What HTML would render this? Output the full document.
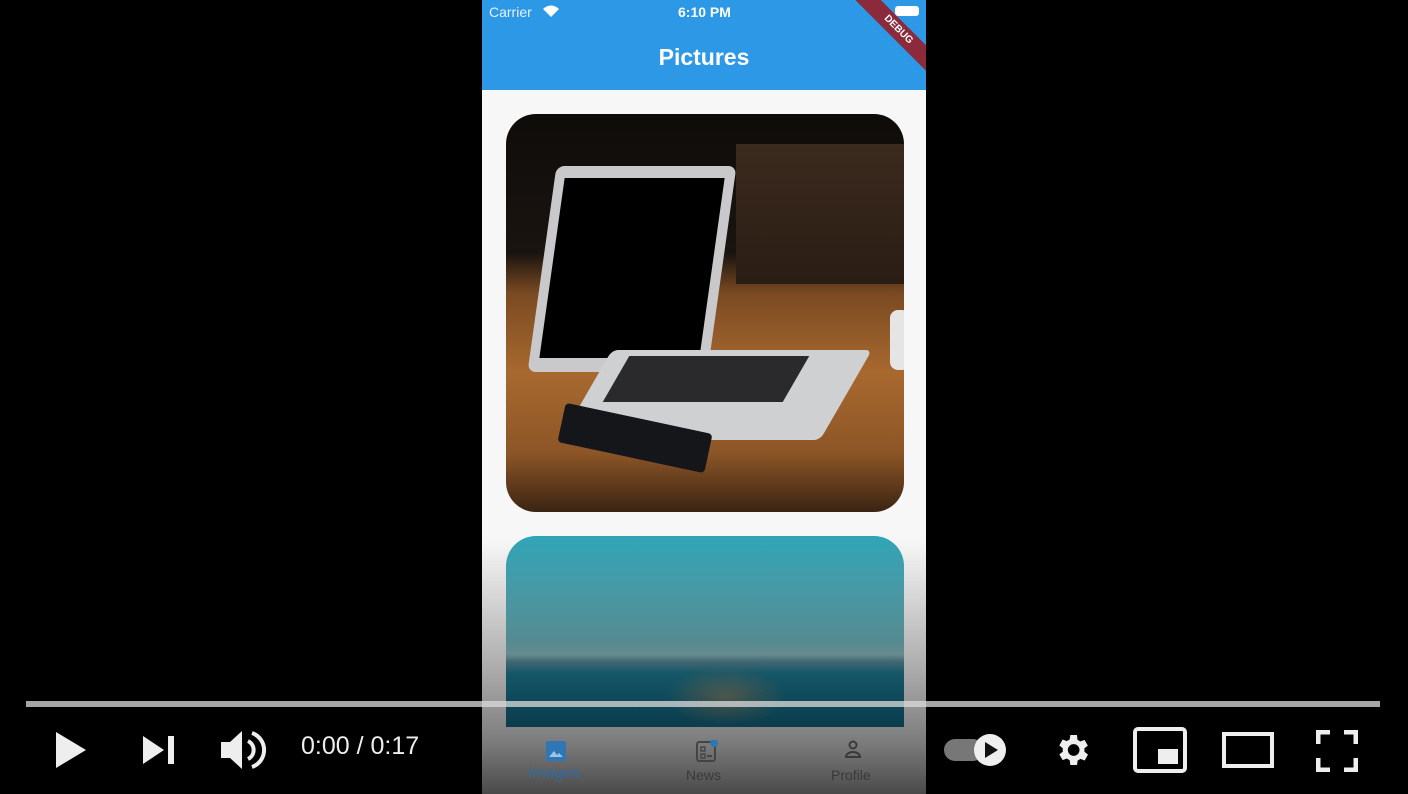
<!DOCTYPE html>
<html><head><meta charset="utf-8"><style>
*{margin:0;padding:0;box-sizing:border-box}
body{width:1408px;height:794px;background:#000;position:relative;overflow:hidden;font-family:"Liberation Sans",sans-serif}
.phone{position:absolute;left:482px;top:0;width:444px;height:794px;background:#f7f7f7;overflow:hidden}
.bar{position:absolute;left:0;top:0;width:444px;height:90px;background:#2c98e6;color:#fff;overflow:hidden}
.card{position:absolute;left:24px;width:398px;border-radius:30px;overflow:hidden}
.shade{position:absolute;left:0;top:540px;width:444px;height:254px;background:linear-gradient(rgba(0,0,0,0),rgba(0,0,0,.3) 50%,rgba(0,0,0,.5) 80%,rgba(0,0,0,.7))}
.ctrl{position:absolute;fill:#eee}
</style></head><body>
<div class="phone">
 <div class="bar">
  <div style="position:absolute;left:7px;top:4px;font-size:14px;color:#e6f1fb">Carrier</div>
  <svg style="position:absolute;left:60px;top:5px" width="18" height="13" viewBox="0 0 18 13"><path d="M9 12L1 4a11 11 0 0 1 16 0z" fill="#fff"/></svg>
  <div style="position:absolute;left:196px;top:4px;font-size:14px;font-weight:bold">6:10 PM</div>
  <div style="position:absolute;left:413px;top:6px;width:24px;height:10px;background:#fff;border-radius:3px"></div>
  <div style="position:absolute;left:0;top:44px;width:444px;text-align:center;font-size:23px;font-weight:bold">Pictures</div>
  <div style="position:absolute;left:361px;top:21px;width:110px;height:18px;background:#8a2a3a;transform:rotate(45deg);color:#fff;font-size:10px;font-weight:bold;text-align:center;line-height:18px">DEBUG</div>
 </div>
 <div class="card" style="top:114px;height:398px;background:linear-gradient(180deg,#0e0c0a 0%,#1a1410 35%,#7a4a22 45%,#a8692f 65%,#8d5627 85%,#3b2413 100%)">
  <div style="position:absolute;left:230px;top:30px;width:170px;height:140px;background:linear-gradient(#3b2a1e,#2a1d14)"></div>
  <div style="position:absolute;left:36px;top:52px;width:180px;height:206px;background:#c9c9cb;transform:skewX(-8deg);border-radius:8px"></div>
  <div style="position:absolute;left:46px;top:64px;width:160px;height:180px;background:#000;transform:skewX(-8deg)"></div>
  <div style="position:absolute;left:80px;top:236px;width:260px;height:90px;background:#cfd0d2;transform:skewX(-30deg);border-radius:6px"></div>
  <div style="position:absolute;left:110px;top:242px;width:180px;height:46px;background:#2a2a2c;transform:skewX(-30deg)"></div>
  <div style="position:absolute;left:54px;top:304px;width:150px;height:40px;background:#15161a;transform:rotate(12deg);border-radius:4px"></div>
  <div style="position:absolute;left:384px;top:196px;width:20px;height:60px;background:#e5e5e5;border-radius:8px"></div>
 </div>
 <div class="card" style="top:536px;height:191px;border-radius:30px 30px 0 0;background:linear-gradient(180deg,#2fa3b5 0%,#6fb6bf 55%,#8cc0c4 62%,#5b8fa0 66%,#1d7f98 72%,#15708c 100%)">
  <div style="position:absolute;left:160px;top:130px;width:120px;height:60px;background:radial-gradient(#7c8a7a,rgba(0,0,0,0) 70%)"></div>
 </div>
 <div style="position:absolute;left:0;top:727px;width:444px;height:67px;background:#f7f7f7"></div>
 <div class="shade"></div>
 <svg style="position:absolute;left:63px;top:740px" width="22" height="22" viewBox="0 0 22 22"><rect x="1" y="1" width="20" height="20" rx="2" fill="#2f77b4"/><path d="M4 17l5-6 3 4 2-2 4 4z" fill="#9cc4e6"/></svg>
 <div style="position:absolute;left:46px;top:765px;font-size:16px;color:#2f6aa0">Images</div>
 <svg style="position:absolute;left:214px;top:740px" width="22" height="22" viewBox="0 0 22 22"><rect x="1" y="2" width="18" height="19" rx="2" fill="none" stroke="#444" stroke-width="2"/><rect x="5" y="7" width="4" height="4" fill="none" stroke="#444" stroke-width="1.4"/><rect x="5" y="14" width="4" height="4" fill="none" stroke="#444" stroke-width="1.4"/><path d="M11 16h5" stroke="#444" stroke-width="2"/><circle cx="18" cy="3" r="4" fill="#2f77b4"/></svg>
 <div style="position:absolute;left:204px;top:767px;font-size:14px;color:#3a3a3a">News</div>
 <svg style="position:absolute;left:361px;top:740px" width="20" height="20" viewBox="0 0 20 20"><circle cx="10" cy="5" r="3.5" fill="none" stroke="#3a3a3a" stroke-width="2"/><path d="M3 17a7 5 0 0 1 14 0z" fill="none" stroke="#3a3a3a" stroke-width="2"/></svg>
 <div style="position:absolute;left:349px;top:767px;font-size:14px;color:#3a3a3a">Profile</div>
</div>
<div style="position:absolute;left:26px;top:701px;width:1354px;height:6px;background:rgba(220,220,220,.75)"></div>
<svg class="ctrl" style="left:54px;top:730px" width="34" height="40" viewBox="0 0 34 40"><path d="M2 2L32 20 2 38z"/></svg>
<svg class="ctrl" style="left:142px;top:735px" width="34" height="30" viewBox="0 0 34 30"><path d="M1 1L22 15 1 29z"/><rect x="26" y="1" width="6" height="28"/></svg>
<svg class="ctrl" style="left:220px;top:728px" width="48" height="44" viewBox="0 0 48 44"><path d="M1 14h9L22 3v38L10 30H1z"/><path d="M28 13a10 10 0 0 1 0 18" fill="none" stroke="#eee" stroke-width="4"/><path d="M32 5a18 18 0 0 1 0 34" fill="none" stroke="#eee" stroke-width="4"/></svg>
<div style="position:absolute;left:301px;top:732px;font-size:25px;color:#eee">0:00 / 0:17</div>
<svg class="ctrl" style="left:944px;top:733px" width="64" height="34" viewBox="0 0 64 34"><rect x="0" y="6" width="40" height="22" rx="11" fill="#777"/><circle cx="46" cy="17" r="16" fill="#eee"/><path d="M41 9l13 8-13 8z" fill="#111"/></svg>
<svg class="ctrl" style="left:1052px;top:730px" width="40" height="40" viewBox="0 0 24 24"><path d="M19.4 13a7.5 7.5 0 0 0 0-2l2.1-1.6-2-3.5-2.5 1a7 7 0 0 0-1.7-1L15 3h-4l-.4 2.7a7 7 0 0 0-1.7 1l-2.5-1-2 3.5L6.5 11a7.5 7.5 0 0 0 0 2l-2.1 1.6 2 3.5 2.5-1a7 7 0 0 0 1.7 1L11 21h4l.4-2.7a7 7 0 0 0 1.7-1l2.5 1 2-3.5zM13 15.5a3.5 3.5 0 1 1 0-7 3.5 3.5 0 0 1 0 7z"/></svg>
<svg class="ctrl" style="left:1133px;top:727px" width="54" height="46" viewBox="0 0 54 46"><rect x="2" y="2" width="50" height="42" rx="3" fill="none" stroke="#eee" stroke-width="4"/><rect x="25" y="22" width="20" height="15"/></svg>
<svg class="ctrl" style="left:1222px;top:732px" width="52" height="36" viewBox="0 0 52 36"><rect x="2" y="2" width="48" height="32" fill="none" stroke="#eee" stroke-width="4"/></svg>
<svg class="ctrl" style="left:1316px;top:730px" width="42" height="42" viewBox="0 0 42 42"><path d="M2 14V2h12M28 2h12v12M40 28v12H28M14 40H2V28" fill="none" stroke="#eee" stroke-width="5"/></svg>
</body></html>
